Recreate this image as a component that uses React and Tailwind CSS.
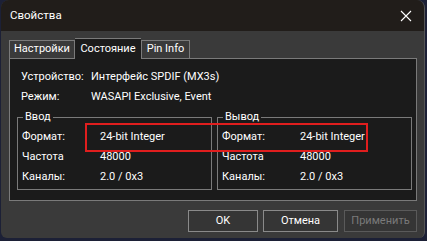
import React from "react";

const font = { fontFamily: 'Roboto, "Liberation Sans", Arial, sans-serif' };

// one label/value line inside the status panel
const InfoRow = ({ label, value, cols }) => (
  <div className={"grid h-[20px] items-center " + cols}>
    <span>{label}</span>
    <span className="whitespace-nowrap">{value}</span>
  </div>
);

const Group = ({ title, rows }) => (
  <div className="relative w-[195px] shrink-0 h-[73px] border border-[#7a7a7a] pt-[9px] pl-[4px]">
    <span className="absolute -top-[9px] left-[5px] bg-[#1b1b1b] px-[2px] leading-[16px]">
      {title}
    </span>
    {rows.map((r) => (
      <InfoRow key={r[0]} label={r[0]} value={r[1]} cols="grid-cols-[78px_1fr]" />
    ))}
  </div>
);

const Button = ({ children, disabled, w }) => (
  <button
    className={
      "h-[22px] border text-[11px] bg-[#353535] " +
      w +
      (disabled ? " border-[#5a5a5a] text-[#7a7a7a]" : " border-[#8a8a8a] text-white")
    }
  >
    {children}
  </button>
);

export default function App() {
  const rows = [
    ["Формат:", "24-bit Integer"],
    ["Частота", "48000"],
    ["Каналы:", "2.0 / 0x3"],
  ];

  return (
    <div className="w-[427px] h-[241px] bg-[#1c2036] overflow-hidden" style={font}>
      <div className="relative ml-[1px] w-[424px] h-[238px] rounded-t-[8px] rounded-b-[6px] overflow-hidden bg-[#3a3a3a] border-r border-[#555] text-white text-[11px]">
        {/* title bar */}
        <div className="flex h-[31px] items-center justify-between bg-[#211d1a] pl-[9px] pr-[12px]">
          <span className="text-[11.5px]">Свойства</span>
          <svg width="12" height="12" viewBox="0 0 12 12">
            <path d="M1 1L11 11M11 1L1 11" stroke="#fff" strokeWidth="1.1" />
          </svg>
        </div>

        {/* tabs */}
        <div className="flex items-end h-[27px] pl-[8px]">
          <div className="h-[18px] w-[66px] border border-b-0 border-[#7a7a7a] bg-[#3a3a3a] flex items-center justify-center">
            Настройки
          </div>
          <div className="h-[21px] w-[66px] border-t border-[#7a7a7a] bg-[#1b1b1b] flex items-center justify-center relative z-10 -mb-[1px]">
            Состояние
          </div>
          <div className="h-[18px] w-[49px] border border-b-0 border-[#7a7a7a] bg-[#3a3a3a] flex items-center justify-center">
            Pin Info
          </div>
        </div>

        {/* panel */}
        <div className="ml-[8px] w-[408px] h-[143px] border border-[#7a7a7a] bg-[#1b1b1b] pt-[8px]">
          <div className="pl-[11px]">
            <InfoRow label="Устройство:" value="Интерфейс SPDIF (MX3s)" cols="grid-cols-[70px_1fr]" />
            <InfoRow label="Режим:" value="WASAPI Exclusive, Event" cols="grid-cols-[70px_1fr]" />
          </div>
          <div className="flex gap-[5px] pl-[7px] mt-[10px]">
            <Group title="Ввод" rows={rows} />
            <Group title="Вывод" rows={rows} />
          </div>
        </div>

        {/* buttons */}
        <div className="flex justify-end pr-[7px] mt-[9px]">
          <Button w="w-[70px]">OK</Button>
          <div className="w-[5px]" />
          <Button w="w-[75px]">Отмена</Button>
          <div className="w-[6px]" />
          <Button w="w-[73px]" disabled>Применить</Button>
        </div>

        {/* red highlight annotation */}
        <div className="absolute left-[84px] top-[123px] w-[283px] h-[29px] border-2 border-[#e01e1e]" />
      </div>
    </div>
  );
}
